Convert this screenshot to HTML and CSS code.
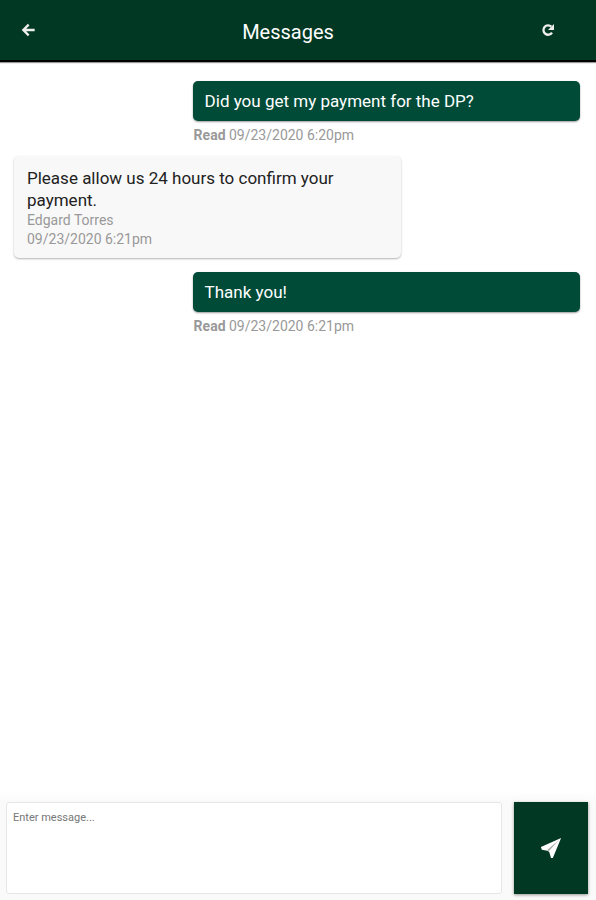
FILE: index.html
```html
<!DOCTYPE html>
<html lang="en">
<head>
    <meta charset="UTF-8">
    <meta name="viewport" content="width=device-width, initial-scale=1.0">
    <title>Messages</title>
    <link rel="stylesheet" href="styles.css">
</head>
<body>
    <header class="header">
        <button type="button" class="icon-btn" aria-label="Back">
            <svg width="16" height="16" viewBox="0 0 24 24"><path d="M22 12H6M13 4l-8 8 8 8"/></svg>
        </button>
        <h1>Messages</h1>
        <button type="button" class="icon-btn" aria-label="Refresh">
            <svg width="16" height="16" viewBox="0 0 24 24"><path d="M18 16a7 7 0 1 1-1-9"/><path class="solid" d="M21 3v9h-9z"/></svg>
        </button>
    </header>
    <main class="messages">
        <div class="message sent">
            <p class="bubble">Did you get my payment for the DP?</p>
            <p class="status"><b>Read</b> 09/23/2020 6:20pm</p>
        </div>
        <div class="message received">
            <div class="bubble">
                <p>Please allow us 24 hours to confirm your payment.</p>
                <p class="meta">Edgard Torres</p>
                <p class="meta">09/23/2020 6:21pm</p>
            </div>
        </div>
        <div class="message sent">
            <p class="bubble">Thank you!</p>
            <p class="status"><b>Read</b> 09/23/2020 6:21pm</p>
        </div>
    </main>
    <form class="composer">
        <textarea class="message-input" name="message" placeholder="Enter message..." aria-label="Message"></textarea>
        <button type="submit" class="send-btn" aria-label="Send">
            <svg width="22" height="22" viewBox="0 0 24 24"><path d="M23 1L1 11l1 3 6 1 2 1 2 7h2z"/><path class="fold" d="M21 3L8 14l1 2z"/></svg>
        </button>
    </form>
</body>
</html>
```

FILE: styles.css
```css
* {
    box-sizing: border-box;
}
body {
    display: flex;
    flex-direction: column;
    min-height: 100vh;
    margin: 0;
    background-color: #fff;
    font-family: Roboto, sans-serif;
}
p {
    margin: 0;
}
.header {
    display: flex;
    align-items: center;
    justify-content: space-between;
    height: 62px;
    padding: 0 28px 0 8px;
    background-color: #003824;
    border-bottom: 2px solid #000;
    box-shadow: 0 1px 1px rgba(0, 0, 0, 0.4);
    color: #fff;
}
.header h1 {
    margin: 0;
    padding-top: 4px;
    font-size: 20px;
    font-weight: 400;
}
.icon-btn {
    display: flex;
    align-items: center;
    justify-content: center;
    width: 40px;
    height: 40px;
    padding: 0;
    border: none;
    background: none;
    cursor: pointer;
}
.icon-btn svg {
    fill: none;
    stroke: #eee;
    stroke-width: 3.5;
}
.icon-btn .solid {
    fill: #eee;
    stroke: none;
}
.messages {
    display: flex;
    flex: 1;
    flex-direction: column;
    padding: 19px 16px 16px 14px;
}
.message {
    width: 65vw;
}
.bubble {
    border-radius: 5px;
    font-size: 17px;
    line-height: 22px;
}
.sent {
    align-self: flex-end;
}
.sent .bubble {
    padding: 9px 12px;
    background-color: #004b38;
    box-shadow: 0 1px 2px rgba(0, 0, 0, 0.4);
    color: #fff;
}
.status,
.meta {
    color: #999;
    font-size: 14px;
    line-height: 19px;
}
.status {
    padding: 5px 1px 11px;
}
.received {
    margin-bottom: 14px;
}
.received .bubble {
    padding: 11px 13px 9px;
    background-color: #f8f8f8;
    box-shadow: 0 1px 2px rgba(0, 0, 0, 0.3);
    color: #222;
}
.composer {
    display: flex;
    gap: 12px;
    padding: 11px 8px 6px 6px;
    background: linear-gradient(#fff, #fafafa 10px);
}
.message-input {
    flex: 1;
    height: 92px;
    padding: 8px 6px;
    border: 1px solid #e6e6e6;
    border-radius: 3px;
    background-color: #fff;
    font-family: inherit;
    font-size: 11px;
    resize: none;
}
.message-input::placeholder {
    color: #777;
}
.send-btn {
    display: flex;
    align-items: center;
    justify-content: center;
    width: 74px;
    height: 92px;
    padding: 0;
    border: none;
    background-color: #003824;
    box-shadow: 0 1px 3px rgba(0, 0, 0, 0.4);
    cursor: pointer;
}
.send-btn svg {
    fill: #fff;
}
.send-btn .fold {
    fill: #aaa;
}
```
